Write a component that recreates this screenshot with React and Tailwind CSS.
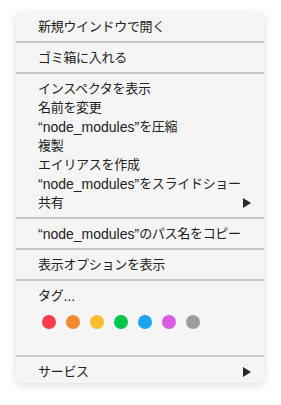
import React from 'react';

const font = { fontFamily: '"Liberation Sans", "Noto Sans CJK JP", sans-serif' };

// latin runs render a bit larger than the kana, like the system menu font
function Label({ text }) {
  const parts = text.split(/([\x20-\x7e“”]+)/).filter(Boolean);
  return (
    <span className="flex items-center">
      {parts.map((p, i) =>
        /^[\x20-\x7e“”]+$/.test(p)
          ? <span key={i} className="text-[14px]">{p}</span>
          : <span key={i} className="tracking-[-0.3px]">{p}</span>
      )}
    </span>
  );
}

function Item({ label, arrow }) {
  return (
    <div className="h-[19px] flex items-center justify-between pl-[22px] pr-[13px] text-[13px] text-[#222] leading-none whitespace-nowrap">
      <Label text={label} />
      {arrow && (
        <svg width="8" height="10" viewBox="0 0 8 10">
          <path d="M0 0 L8 5 L0 10 Z" fill="#2a2a2a" />
        </svg>
      )}
    </div>
  );
}

function Sep() {
  return <div className="my-[5px] h-[2px] bg-[#c9c9c9]" />;
}

export default function App() {
  const tags = ['#fc3b4b', '#f5892c', '#fdbd2e', '#01c64d', '#1aa6ee', '#d85ce3', '#9d9d9d'];
  return (
    <div className="w-[281px] h-[405px] bg-white pt-[12px] pl-[16px]" style={font}>
      <div className="w-[248px] h-[371px] bg-[#f5f5f5] rounded-[6px] shadow-[0_2px_8px_rgba(0,0,0,0.14)] pt-[5px]">
        <Item label="新規ウインドウで開く" />
        <Sep />
        <Item label="ゴミ箱に入れる" />
        <Sep />
        <Item label="インスペクタを表示" />
        <Item label="名前を変更" />
        <Item label="“node_modules”を圧縮" />
        <Item label="複製" />
        <Item label="エイリアスを作成" />
        <Item label="“node_modules”をスライドショー" />
        <Item label="共有" arrow />
        <Sep />
        <Item label="“node_modules”のパス名をコピー" />
        <Sep />
        <Item label="表示オプションを表示" />
        <Sep />
        <Item label="タグ..." />
        <div className="h-[45px] pt-[10px] pl-[26px] flex items-start gap-[10px]">
          {tags.map(c => (
            <div key={c} className="w-[14px] h-[14px] rounded-full" style={{ backgroundColor: c }} />
          ))}
        </div>
        <Sep />
        <Item label="サービス" arrow />
      </div>
    </div>
  );
}
